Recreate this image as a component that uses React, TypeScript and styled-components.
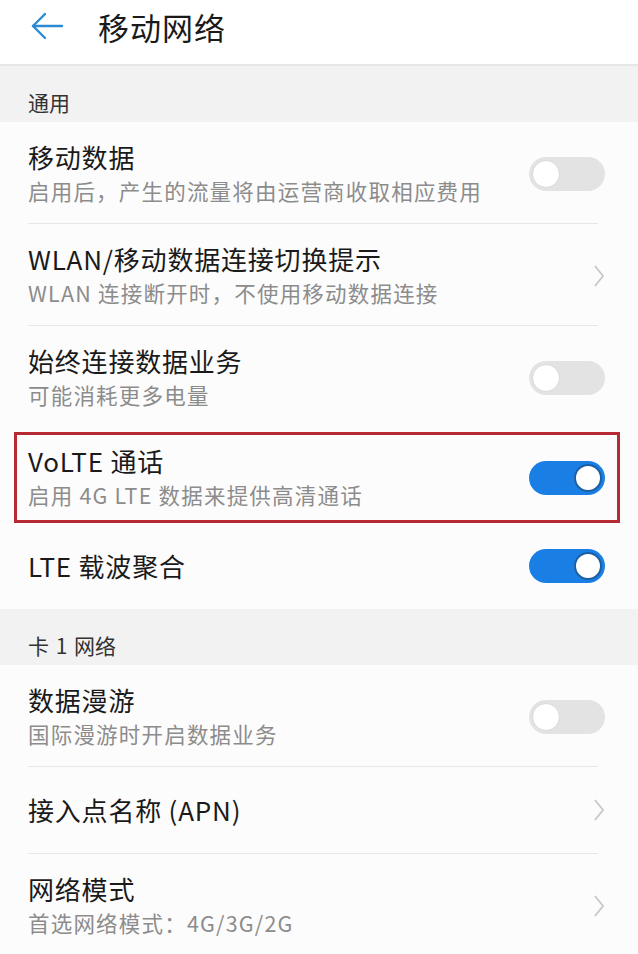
import styled, { createGlobalStyle } from 'styled-components'

const GlobalStyle = createGlobalStyle`
  html, body {
    margin: 0;
    padding: 0;
    background: #fdfcfc;
  }
  body {
    font-family: "Noto Sans CJK SC", "Noto Sans", Roboto, sans-serif;
    -webkit-font-smoothing: antialiased;
  }
`

const Page = styled.div`
  width: 638px;
  min-height: 954px;
  display: flex;
  flex-direction: column;
  background: #fdfcfc;
  overflow: hidden;
`

const Header = styled.header`
  height: 66px;
  display: flex;
  align-items: center;
  gap: 34px;
  padding-left: 30px;
  background: #ffffff;
  border-bottom: 2px solid #e6e6e6;
  box-shadow: 0 1px 2px rgba(0, 0, 0, 0.06);
  box-sizing: border-box;
`

const BackButton = styled.button`
  width: 34px;
  height: 34px;
  padding: 0;
  border: 0;
  background: none;
  display: flex;
  align-items: center;
  justify-content: center;
  margin-top: -12px;
`

const Title = styled.h1`
  margin: -12px 0 0;
  font-size: 31px;
  font-weight: 400;
  color: #1a1a1a;
  letter-spacing: 1px;
`

const SectionHeader = styled.div`
  background: #f3f2f2;
  padding: 23px 28px 7px;
  font-size: 21px;
  line-height: 26px;
  color: #333333;
  word-spacing: 2px;
`

const Row = styled.div<{ $single?: boolean; $highlight?: boolean }>`
  display: flex;
  align-items: center;
  justify-content: space-between;
  box-sizing: border-box;
  padding: ${(p) => (p.$single ? '0 33px 0 28px' : '18px 33px 15px 28px')};
  min-height: ${(p) => (p.$single ? '86px' : '101px')};
  ${(p) =>
    p.$highlight &&
    `
    border: 3px solid #b52a33;
    margin: 5px 18px 0 14px;
    padding: 9px 12px 8px 11px;
    min-height: 91px;
  `}
`

const Texts = styled.div`
  display: flex;
  flex-direction: column;
`

const RowTitle = styled.div`
  font-size: 26px;
  line-height: 34px;
  color: #1a1a1a;
  letter-spacing: 0.8px;
`

const RowSub = styled.div`
  font-size: 21.5px;
  line-height: 34px;
  color: #8c8c8c;
  letter-spacing: 1.2px;
`

const Divider = styled.div`
  height: 1px;
  margin: 0 40px 0 28px;
  background: #e8e7e7;
`

const Track = styled.div<{ $on?: boolean }>`
  width: 76px;
  height: 34px;
  border-radius: 17px;
  box-sizing: border-box;
  padding: 3px;
  display: flex;
  justify-content: ${(p) => (p.$on ? 'flex-end' : 'flex-start')};
  align-items: center;
  background: ${(p) => (p.$on ? '#1a7fe4' : '#e4e3e3')};
  flex-shrink: 0;
`

const Knob = styled.div<{ $on?: boolean }>`
  width: 28px;
  height: 28px;
  border-radius: 50%;
  background: #ffffff;
  box-sizing: border-box;
  border: ${(p) => (p.$on ? '2px solid #1d5fa6' : '1px solid #d8d8d8')};
`

const Chevron = styled.svg`
  width: 12px;
  height: 24px;
  flex-shrink: 0;
`

const Toggle = ({ on }: { on?: boolean }) => (
  <Track $on={on}>
    <Knob $on={on} />
  </Track>
)

const Arrow = () => (
  <Chevron viewBox="0 0 12 24">
    <polyline points="2,2 10,12 2,22" fill="none" stroke="#c7c7c7" strokeWidth="1.8" />
  </Chevron>
)

type Item = {
  title: string
  sub?: string
  control: 'off' | 'on' | 'arrow'
  highlight?: boolean
}

const general: Item[] = [
  { title: '移动数据', sub: '启用后，产生的流量将由运营商收取相应费用', control: 'off' },
  { title: 'WLAN/移动数据连接切换提示', sub: 'WLAN 连接断开时，不使用移动数据连接', control: 'arrow' },
  { title: '始终连接数据业务', sub: '可能消耗更多电量', control: 'off' },
  { title: 'VoLTE 通话', sub: '启用 4G LTE 数据来提供高清通话', control: 'on', highlight: true },
  { title: 'LTE 载波聚合', control: 'on' },
]

const card1: Item[] = [
  { title: '数据漫游', sub: '国际漫游时开启数据业务', control: 'off' },
  { title: '接入点名称 (APN)', control: 'arrow' },
  { title: '网络模式', sub: '首选网络模式：4G/3G/2G', control: 'arrow' },
]

const SettingRow = ({ item }: { item: Item }) => (
  <Row $single={!item.sub} $highlight={item.highlight}>
    <Texts>
      <RowTitle>{item.title}</RowTitle>
      {item.sub && <RowSub>{item.sub}</RowSub>}
    </Texts>
    {item.control === 'arrow' ? <Arrow /> : <Toggle on={item.control === 'on'} />}
  </Row>
)

const renderList = (items: Item[]) =>
  items.map((item, i) => {
    const next = items[i + 1]
    const showDivider = next && !item.highlight && !next.highlight
    return (
      <div key={item.title}>
        <SettingRow item={item} />
        {showDivider && <Divider />}
      </div>
    )
  })

const App = () => {
  return (
    <>
      <GlobalStyle />
      <Page>
        <Header>
          <BackButton aria-label="back">
            <svg width="34" height="30" viewBox="0 0 34 30">
              <line x1="3" y1="15" x2="32" y2="15" stroke="#2b8ad3" strokeWidth="2.4" strokeLinecap="round" />
              <polyline points="15,3 3,15 15,27" fill="none" stroke="#2b8ad3" strokeWidth="2.4" strokeLinecap="round" strokeLinejoin="round" />
            </svg>
          </BackButton>
          <Title>移动网络</Title>
        </Header>
        <SectionHeader>通用</SectionHeader>
        {renderList(general)}
        <SectionHeader>卡 1 网络</SectionHeader>
        {renderList(card1)}
      </Page>
    </>
  )
}

export default App
